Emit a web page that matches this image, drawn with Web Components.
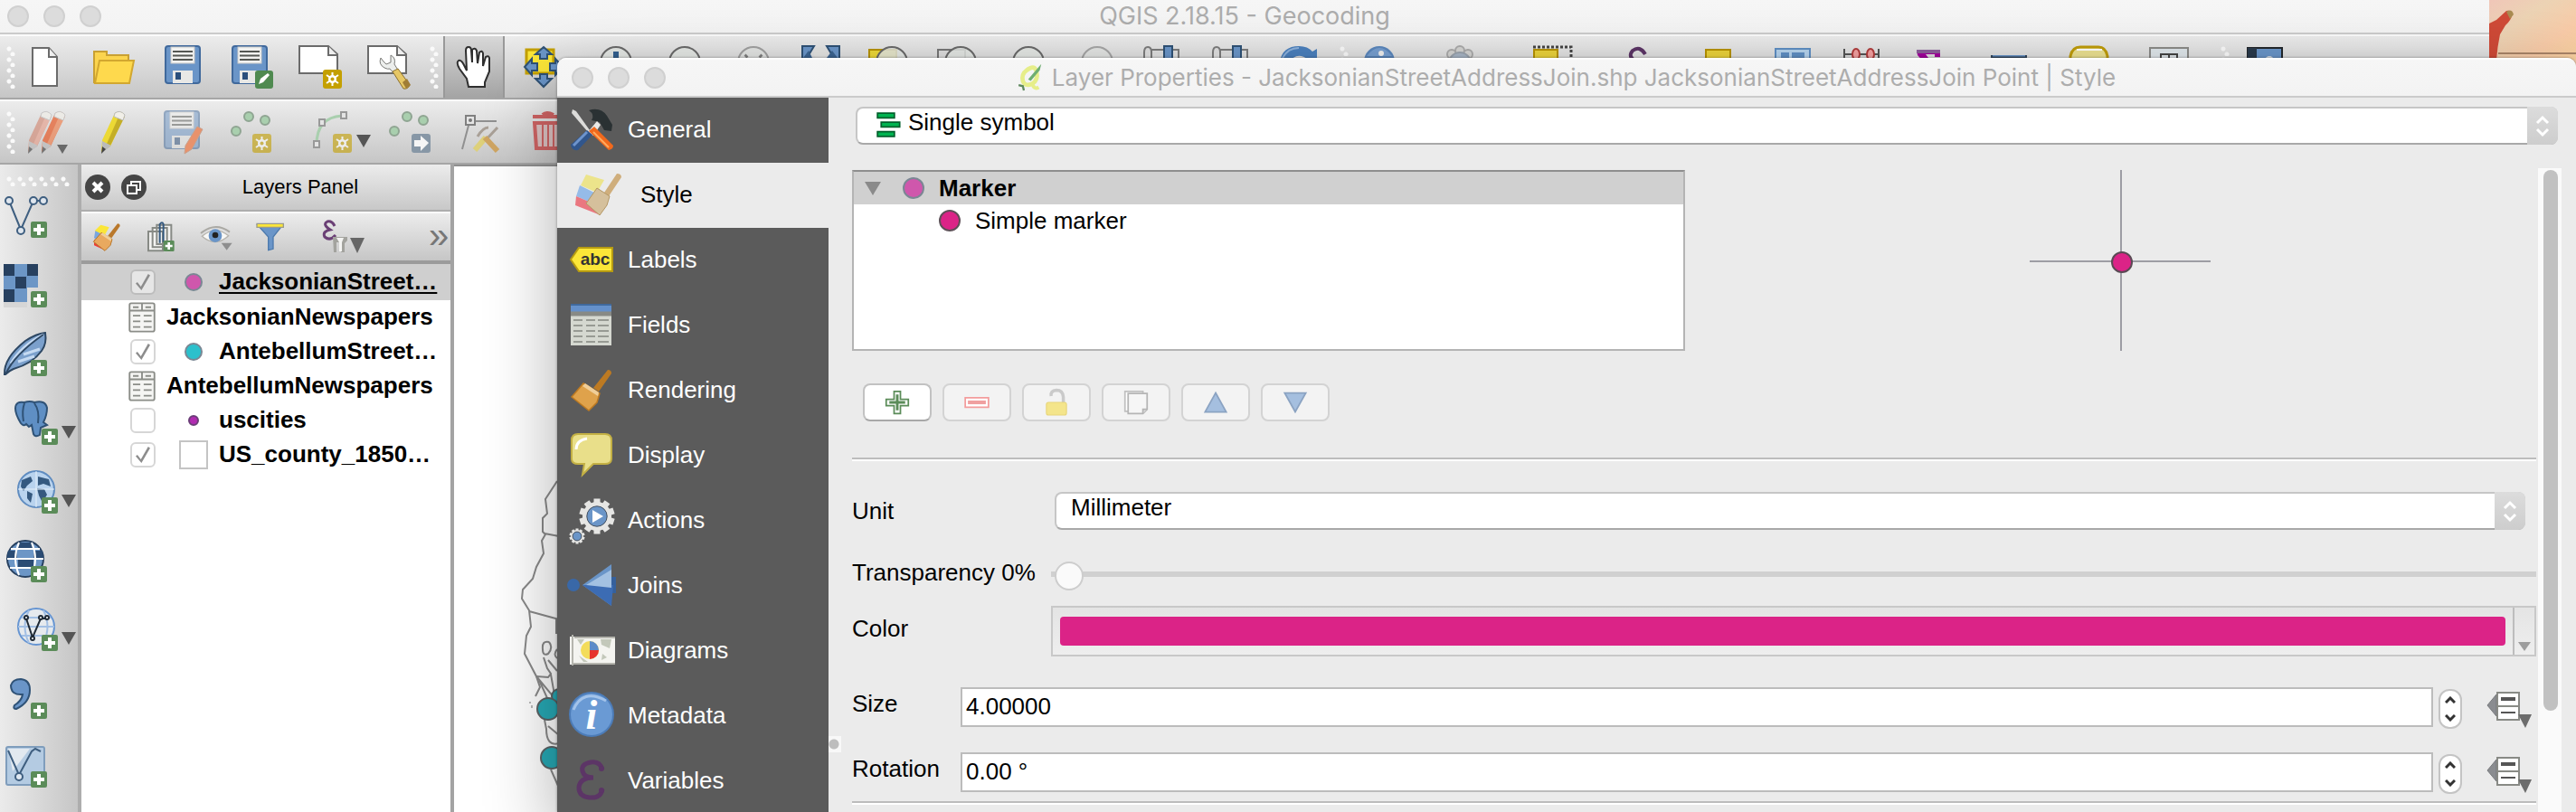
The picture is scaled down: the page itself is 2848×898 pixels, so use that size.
<!DOCTYPE html>
<html lang="en">
<head>
<meta charset="utf-8">
<title>QGIS 2.18.15 - Geocoding</title>
<style>
  html, body { margin: 0; height: 100%; }
  body { font: 26px/30px "Liberation Sans", Arial, sans-serif; color: #000; overflow: hidden; }
</style>
</head>
<body>
<qgis-desktop></qgis-desktop>

<script>
const BASE = '*{box-sizing:border-box}button{font:inherit;color:inherit;border:0;background:none;padding:0;margin:0}';

function define(name, css, html, setup) {
  customElements.define(name, class extends HTMLElement {
    connectedCallback() {
      if (this.shadowRoot) return;
      const root = this.attachShadow({ mode: 'open' });
      const markup = typeof html === 'function' ? html(this) : html;
      root.innerHTML = '<style>' + BASE + css + '</style>' + markup;
      if (setup) setup(this, root);
    }
  });
}

/* ---------- icon set, drawn on a 48 x 48 grid ---------- */
const plus = (x = 30, y = 30) => `<rect x="${x}" y="${y}" width="18" height="18" rx="2" fill="#5b8c59"/><path d="M${x + 9} ${y + 3}v12M${x + 3} ${y + 9}h12" stroke="#fff" stroke-width="4"/>`;
const star = (x = 29, y = 28, c = '#c4a000') => `<rect x="${x}" y="${y}" width="21" height="21" rx="3" fill="${c}"/><path d="M${x + 10.5} ${y + 3}v15M${x + 4} ${y + 6}l13 9M${x + 17} ${y + 6}l-13 9" stroke="#fff" stroke-width="2"/><circle cx="${x + 10.5}" cy="${y + 10.5}" r="4.5" fill="#fff"/><circle cx="${x + 10.5}" cy="${y + 10.5}" r="2" fill="${c}"/>`;
const floppy = `<rect x="5" y="1" width="38" height="41" rx="3" fill="#6a95c8" stroke="#40699c" stroke-width="2"/><rect x="11" y="2" width="26" height="18" fill="#f2f2f0" stroke="#c9c9c7"/><path d="M13 7h22M13 11.500h22M13 16h22" stroke="#555753" stroke-width="2"/><path d="M13 42V28h22v14z" fill="#e8e8e6"/><rect x="16" y="30" width="6" height="8" fill="#2b4f7c"/>`;
const lens = (x, o = 1, extra = '') => `<g opacity="${o}"><circle cx="${x}" cy="19" r="17" fill="#e4e7e4" fill-opacity=".85" stroke="#6a6a6a" stroke-width="2"/>${extra}</g>`;
const dots = `<g fill="#a9cfae" stroke="#8fa592" stroke-width="2"><circle cx="20" cy="7" r="5"/><circle cx="38" cy="11" r="5"/><circle cx="6" cy="23" r="5"/></g>`;
const brush = (h = '#c8872e', b = '#e0a458') => `<path d="M26 22L42 2q4 0 4 4L32 26z" fill="${h}"/><path d="M15 17l18 11-3 10-9 9L2 32z" fill="${b}" stroke="${h}" stroke-width="1.500"/><path d="M17 17l15 10-1 4-17-11z" fill="#f0ce98"/>`;
const veeNodes = (c, f = '#fff') => `<path d="M6 6L19 38 33 6h11" fill="none" stroke="${c}" stroke-width="2"/><g fill="${f}" stroke="${c}" stroke-width="2"><circle cx="6" cy="6" r="4"/><circle cx="33" cy="6" r="4"/><circle cx="44" cy="6" r="4"/><circle cx="19" cy="39" r="4"/></g>`;
const gear = (x, y, r) => { let s = ''; for (let a = 0; a < 360; a += 36) s += `<rect x="${x - r * .22}" y="${y - r * 1.22}" width="${r * .44}" height="${r * .5}" fill="#e6e6e4" transform="rotate(${a} ${x} ${y})"/>`; return s + `<circle cx="${x}" cy="${y}" r="${r}" fill="#e6e6e4"/><circle cx="${x}" cy="${y}" r="${r * .7}" fill="#6a95c8" stroke="#45505e"/>`; };
const pencil = (x, c, d) => `<g transform="translate(${x} 0)"><path d="M17 3q6-4 11 2L12 40 2 46 3 33z" fill="${c}"/><path d="M22 5L8 37l4 2L28 7z" fill="${d}"/><path d="M3 34l10 5-10 8z" fill="#bbb"/><path d="M3 40l4 3-5 5z" fill="#444"/><path d="M17 3q6-4 11 2l-2 6-10-4z" fill="#f1efe8" stroke="#bbb"/></g>`;

const ICONS = {
  'new': `<path d="M10 3h18l9 10v32H10z" fill="#fff" stroke="#6b6b6b" stroke-width="2"/><path d="M28 3v10h9" fill="#eee" stroke="#6b6b6b" stroke-width="2"/>`,
  open: `<path d="M2 7h14v4h24v10H10L4 41H2z" fill="#fbd44e" stroke="#c9a033" stroke-width="2"/><path d="M8 17h38l-5 25H3z" fill="#fed94d" stroke="#d2a72f" stroke-width="2"/>`,
  save: floppy,
  saveas: `<g transform="translate(-2 0)">${floppy}</g><rect x="28" y="28" width="20" height="20" rx="3" fill="#4f8a50"/><path d="M32 43l2-6 8-6 2 2-7 8z" fill="#fff"/>`,
  composer: `<path d="M1 1h32l10 9v21H1z" fill="#fff" stroke="#6b6b6b" stroke-width="2"/><path d="M33 1v10h10" fill="#eee" stroke="#6b6b6b" stroke-width="2"/>${star(27, 27)}`,
  manager: `<path d="M1 1h32l10 9v21H1z" fill="#fff" stroke="#6b6b6b" stroke-width="2"/><path d="M33 1v10h10" fill="#eee" stroke="#6b6b6b" stroke-width="2"/><path d="M15 14q-3 7 4 11 4 2 6 1l5 6 5-3-5-8q2-7-4-10v8l-5 2-3-3z" fill="#eceeec" stroke="#7b7b78"/><path d="M28 29l6-3 13 18q-2 5-7 4z" fill="#e6c766" stroke="#8b6f2c"/><path d="M39 41l5-4 4 7-5 4z" fill="#a07d35"/>`,
  hand: `<path d="M18 46l-2-9-8-11q-4-7-1-9 3-1 6 5l3 6-1-22q0-4 3-4t3 4l1 13 0-14q3-3 5 1l1 14 2-12q3-3 4 1v14l3-10q3-2 4 1v15l-5 12v5z" fill="#fff" stroke="#2f2f2f" stroke-width="2"/>`,
  panto: `<rect x="6" y="5" width="30" height="26" fill="#fbe638" stroke="#c4a000" stroke-width="3"/><g fill="#6a95c8" stroke="#2f5276" stroke-width="2"><path d="M25 2l9 8h-5v5h-8v-5h-5zM25 46l9-9h-5v-5h-8v5h-5zM4 24l8-9v5h6v8h-6v5zM46 24l-8-9v5h-6v8h6v5z"/></g>`,
  zoomin: lens(29, 1, '<path d="M29 7v22" stroke="#33608f" stroke-width="6"/>'),
  zoomout: lens(29),
  zoomnative: lens(29, .55, '<path d="M22 11l-2 2M36 11l2 2" stroke="#333" stroke-width="4"/>'),
  zoomfull: `<path d="M7 1h13l-6 10 4 30H7zM48 1H34l6 10-4 30h12z" fill="#6a95c8" stroke="#2f5276" stroke-width="2"/><path d="M8 14l6-8 4 8M34 14l6-8 6 8" fill="#3b6491"/><circle cx="27" cy="9" r="7" fill="#e4e4e2"/>`,
  zoomsel: `<rect x="5" y="5" width="30" height="24" fill="#ecd838" stroke="#b79300" stroke-width="2"/>${lens(30)}`,
  zoomlayer: `<rect x="5" y="5" width="30" height="24" fill="#ddd" stroke="#777" stroke-width="2"/>${lens(30)}`,
  zoomlast: lens(29),
  zoomnext: lens(29, .5),
  bookmark: `<path d="M5 8q0-6 4-6t4 6v30H5zM13 5h30v30H13z" fill="#e0e0e0" stroke="#7d7d7d" stroke-width="2"/><path d="M27 1h9v30h-9z" fill="#6a95c8" stroke="#2f5276" stroke-width="2"/>`,
  refresh: `<path d="M3 18Q6 1 24 1q10 0 15 6l5-3v18H28l6-6Q22 6 12 20z" fill="#4b80bd"/><path d="M6 14Q12 3 24 3" stroke="#8eb2dc" stroke-width="2" fill="none"/>`,
  identify: `<circle cx="19" cy="18" r="17" fill="#5b87bd"/><path d="M5 12Q19-6 33 12z" fill="#8aafdc" opacity=".6"/><circle cx="21" cy="9" r="3" fill="#eee"/>`,
  action: `<g fill="#d4d4d2" stroke="#aaa" stroke-width="2"><circle cx="13" cy="10" r="5"/><circle cx="22" cy="6" r="5"/><circle cx="31" cy="10" r="5"/></g><circle cx="22" cy="20" r="12" fill="#a8b6c6" stroke="#9aa3ad" stroke-width="2"/>`,
  selectrect: `<path d="M3 2h42v28" stroke="#444" stroke-width="3" stroke-dasharray="3 2" fill="none"/><rect x="4" y="5" width="26" height="22" fill="#ead23b" stroke="#b79300" stroke-width="2"/>`,
  expr: `<path d="M31 10Q25 0 17 6q-6 7 4 12" fill="none" stroke="#5c3566" stroke-width="4"/>`,
  deselect: `<rect x="10" y="5" width="27" height="24" fill="#ead23b" stroke="#b79300" stroke-width="2"/>`,
  attrs: `<rect x="5" y="4" width="38" height="30" fill="#b5d3ee" stroke="#5f8fc4" stroke-width="2"/><path d="M11 11h9M23 11h14" stroke="#5f8fc4" stroke-width="6"/>`,
  calc: `<path d="M5 4v30M43 4v30M5 10h38" stroke="#555" stroke-width="2"/><g fill="#f3a0a0" stroke="#b03a3a" stroke-width="2"><ellipse cx="18" cy="10" rx="4" ry="6"/><ellipse cx="34" cy="10" rx="4" ry="6"/></g>`,
  sum: `<path d="M9 5h26v8h-6v-3H19l9 12-9 12h-8l9-12L10 11z" fill="#a3009c"/><path d="M9 5h26v4H9z" fill="#8d5f9b"/>`,
  ruler: `<path d="M4 11v8h38v-8" fill="#6a95c8" stroke="#33475e" stroke-width="2"/><path d="M4 14h38" stroke="#33475e" stroke-width="3"/>`,
  tips: `<path d="M3 28V12Q5 2 14 2h20q8 0 10 10v16z" fill="#ebe191" stroke="#bf9c0a" stroke-width="3"/><path d="M10 5h28" stroke="#fff" stroke-width="2"/>`,
  text: `<rect x="3" y="3" width="42" height="32" fill="#dfe6ea" stroke="#8b8b88" stroke-width="2"/><path d="M15 16v-6h18v6M24 9v20" fill="none" stroke="#444" stroke-width="2"/>`,
  help: `<rect x="5" y="3" width="38" height="34" fill="#6a95c8" stroke="#23272b" stroke-width="2"/><path d="M5 3h10v34H5z" fill="#2a3a4b"/><circle cx="29" cy="17" r="5" fill="#dce4ec"/>`,
  pencils: `<g opacity=".65">${pencil(3, '#d38a75', '#e8a08c')}${pencil(18, '#e8501a', '#f07d4a')}<path d="M37 38h12l-6 10z" fill="#333"/></g>`,
  pencil: pencil(8, '#ecd935', '#c4ae27'),
  saveedits: `<g opacity=".5"><g transform="translate(-1 0)">${floppy}</g></g><path d="M40 18l6 3-12 22-8 5 1-9z" fill="#e8926c" stroke="#c9a08c"/>`,
  addpoint: `<g transform="translate(1 0)">${dots}</g><g opacity=".6">${star(25, 26)}</g>`,
  addcurve: `<path d="M8 38Q8 8 36 6" fill="none" stroke="#a9cfae" stroke-width="3"/><g fill="#e4e4e4" stroke="#999" stroke-width="2"><path d="M5 34h6v7H5zM11 10h6v7h-6zM35 2h6v7h-6z"/></g><g opacity=".6">${star(26, 26)}</g>`,
  movepoint: `${dots}<rect x="25" y="26" width="21" height="21" rx="3" fill="#8797a6"/><path d="M28 33h7v-5l9 8-9 9v-5h-7z" fill="#f5f5f5"/>`,
  nodes: `<path d="M5 43L13 13M18 12h25" stroke="#909090" stroke-width="2" fill="none"/><rect x="9" y="6" width="10" height="10" fill="#e5e5e5" stroke="#808080" stroke-width="2"/><circle cx="14" cy="11" r="2" fill="#777"/><path d="M22 29q6-10 12-10M44 19L30 34" stroke="#a9a097" stroke-width="3" fill="none"/><path d="M31 30L19 44" stroke="#ddd07a" stroke-width="6"/><path d="M30 30l14 15" stroke="#cfa562" stroke-width="6"/>`,
  trash: `<g fill="none" stroke="#cf6464"><path d="M7 7h34M18 5q4-4 12 0" stroke-width="4"/><path d="M9 14h30l-2 28H11z" stroke-width="4" fill="#dcc3c3"/><path d="M18 16v24M24 16v24M30 16v24" stroke-width="2"/></g>`,
  vector: veeNodes('#3f5f80', '#dfe6ee') + plus(30, 29),
  raster: `<path d="M0 0h38v26H26v22H0z" fill="#6c96c6"/><path d="M0 0h12v13H0zM26 0h12v13H26zM13 14h12v13H13zM0 28h12v14H0z" fill="#27405f"/><path d="M0 42h26v6H0z" fill="#d6d6d6"/>${plus(30, 30)}`,
  feather: `<path d="M1 46Q0 28 24 9 36 1 46 0q2 12-4 20-10 14-31 20-5 2-9 6z" fill="#7ba0cc" stroke="#2d4763" stroke-width="2"/><path d="M8 34Q20 14 44 2M16 32l18-6M22 24l18-6" stroke="#c5daf2" stroke-width="3" fill="none"/><path d="M2 46Q12 24 44 2" stroke="#2d4763" stroke-width="2" fill="none"/>${plus(30, 30)}`,
  postgis: `<path d="M1 8Q1-1 11 1q6-2 11 0 12-3 14 6 0 8-4 16l4 3-7 3-1 8q-5 3-7-1l-2-10-3 2-3-3q-3 3-6-1Q1 14 1 8z" fill="#5f8fc4" stroke="#2f5276" stroke-width="2"/><path d="M11 2q-3 8-1 20M22 2q6 8 4 22" stroke="#2f5276" stroke-width="2" fill="none"/>${plus(30, 30)}`,
  spatialite: `<circle cx="24" cy="21" r="20" fill="#b9d3ee" stroke="#5f8cc0" stroke-width="2"/><path d="M8 11l10-4 2 5-6 5-4 6-3-5zM14 23l6 3-2 10-4-5zM26 7l12 3 2 8-8-3-6 2zM25 20l8 1 3 6-5 9-4-8z" fill="#35597f"/><path d="M4 21h40M24 1v40" stroke="#e8f1fa"/>${plus(30, 30)}`,
  wms: `<circle cx="24" cy="22" r="20" fill="#6c96c6" stroke="#27405f" stroke-width="2"/><path d="M5 13h10v9H4zM33 13h10l1 9H33zM16 22h17v10H16zM17 4h14l3 7H14z" fill="#2b4c74"/><path d="M4 22h40M8 11h32M7 32h34M17 4q-8 18 0 36M31 4q8 18 0 36" stroke="#fff" stroke-width="2" fill="none"/>${plus(30, 30)}`,
  wfs: `<g fill="none" stroke="#6695d2" stroke-width="2"><circle cx="24" cy="21" r="20" fill="#e6eaee"/><path d="M4 21h40M8 11h32M8 31h32M16 3q-9 18 0 36M32 3q9 18 0 36" stroke="#a2bfe4"/></g><g fill="#fff" stroke="#1f2a36" stroke-width="2"><path d="M13 12L20 33 29 12h8" fill="none"/><circle cx="13" cy="11" r="2"/><circle cx="29" cy="11" r="2"/><circle cx="36" cy="11" r="2"/><circle cx="20" cy="34" r="2"/></g>${plus(30, 30)}`,
  comma: `<path d="M8 10q2-7 11-7 10 1 10 12 0 14-15 21-4 0-2-4 8-5 9-12-13 1-13-10z" fill="#6a95c8" stroke="#2f5276" stroke-width="2"/>${plus(30, 29)}`,
  virtual: `<rect x="3" y="2" width="42" height="42" rx="2" fill="#b4cbe2" stroke="#7f9dbc" stroke-width="2"/><path d="M5 4h24L10 29z" fill="#e2e9f0"/><path d="M5 6l12 27L31 7l4-3 6 3" fill="none" stroke="#3f5f80" stroke-width="2"/><circle cx="17" cy="35" r="4" fill="#dfe8f2" stroke="#3f5f80" stroke-width="2"/>${plus(30, 29)}`,
  style: `<path d="M14 4l14 4-8 14-16-8z" fill="#fbe638"/><path d="M5 14l16 8-6 10-12-6z" fill="#7aa6de"/><path d="M3 28l12 4 6 14L3 38z" fill="#ee3b35"/>${brush('#b9782b', '#e9a95f')}`,
  stylepale: `<path d="M12 2l20 6-8 14-18-8z" fill="#ece48b"/><path d="M5 14l16 8-6 10-14-6z" fill="#95bbe8"/><path d="M1 26l14 6 13 15L0 36z" fill="#ea7780"/><path d="M32 22L46 1q5 0 5 4L37 26z" fill="#cfae7c"/><path d="M24 17l14 9-3 10-8 11-15-13z" fill="#d5c09c" stroke="#b49764"/>`,
  group: `<g fill="#f3f3f1" stroke="#878a85" stroke-width="3"><path d="M3 15h24v32H3zM10 9h24v32H10zM17 4h24v32H17z"/></g><path d="M22 34V3q4-5 6 0v30" fill="none" stroke="#35597f" stroke-width="3"/>${plus(28, 30)}`,
  eye: `<path d="M0 18Q24-2 48 16" fill="none" stroke="#aaa9a4" stroke-width="3"/><path d="M2 23Q24 4 46 22 24 42 2 23z" fill="#f8f8f6" stroke="#b5b3ad" stroke-width="2"/><circle cx="24" cy="22" r="11" fill="#6a95c8"/><circle cx="24" cy="21" r="5" fill="#222"/><path d="M34 34h18l-9 12z" fill="#8e8e8e"/>`,
  funnel: `<path d="M4 4h42L30 24v20l-8 2V24z" fill="#6a95c8" stroke="#4d7aad" stroke-width="2"/><path d="M3 2h44v6H3z" fill="#fbe638" stroke="#9a9b8c" stroke-width="2"/>`,
  general: `<path d="M3 2l4 2 15 21-2 2L2 6z" fill="#dcdcda"/><path d="M21 3q13-4 20 6l6 10-1 7-8-1-5-9-9-2q4-6-3-11z" fill="#2a3133"/><path d="M30 15l4 4-8 12-6-4z" fill="#e9e9e7"/><path d="M19 25l6 5L9 47q-7 1-8-6z" fill="#31568c"/><path d="M19 27L4 42" stroke="#6e94cc" stroke-width="3"/><path d="M21 26l6-5 21 21q0 4-5 5z" fill="#f2691c"/><path d="M26 27l17 17" stroke="#ffab5e" stroke-width="2"/>`,
  labels: `<path d="M1 24l9-13h37v26H10z" fill="#fbe638" stroke="#b69b12" stroke-width="2"/><text x="28" y="30" font-family="Liberation Sans" font-weight="700" font-size="19" text-anchor="middle" fill="#333">abc</text>`,
  fields: `<rect x="1" y="1" width="45" height="46" fill="#d5d8d0"/><path d="M1 1h45v9H1z" fill="#6591cb"/><path d="M1 2h45" stroke="#40699c" stroke-width="2"/><path d="M1 12h45" stroke="#888a85" stroke-width="5"/><path d="M4 19h10M18 19h10M31 19h12M4 25h10M18 25h10M31 25h12M4 31h10M18 31h10M31 31h12M4 37h10M18 37h10M31 37h12M4 43h10M18 43h10M31 43h12" stroke="#979a93" stroke-width="2"/>`,
  rendering: brush('#bd7a22', '#dfa24b'),
  display: `<path d="M9 1h30q7 0 7 7v20q0 6-7 6H26L14 46l2-12H9q-7 0-7-6V8q0-7 7-7z" fill="#e9df8a" stroke="#c3b044" stroke-width="2"/><path d="M7 18q0-10 12-12" fill="none" stroke="#fff" stroke-width="3"/>`,
  actions: gear(30, 20, 16) + gear(8, 42, 7) + '<path d="M25 13l12 7-12 7z" fill="#fff"/>',
  joins: `<path d="M14 24L46 1v46z" fill="#6a95c8"/><path d="M46 15h5v18h-5z" fill="#35609c"/><path d="M14 24h34l-2 23z" fill="#3c6cb4"/><path d="M18 24L46 7v20z" fill="#a3c1e2"/><ellipse cx="4" cy="24" rx="7" ry="7" fill="#3968a8"/>`,
  diagrams: `<rect x="0" y="9" width="50" height="31" fill="#f4f4f0"/><path d="M3 7v34M5 10h45M3 39h47" stroke="#b5b5ae" stroke-width="2"/><path d="M8 12h8l-4 6zM34 12h12l-2 10-9-4zM10 30l5 7h5zM36 28l5 4-6 3z" fill="#c3c8ba"/><circle cx="22" cy="24" r="10" fill="#f3dc5a"/><path d="M22 24V14a10 10 0 0 1 10 10z" fill="#5c8bc8"/><path d="M22 24h10a10 10 0 0 1-10 10z" fill="#e6332c"/>`,
  metadata: `<circle cx="24" cy="23" r="24" fill="#6a9ad4" stroke="#4c7cb8" stroke-width="2"/><path d="M4 18Q14-6 40 8" stroke="#a3c3ea" stroke-width="3" fill="none"/><text x="24" y="39" font-family="Liberation Serif" font-weight="700" font-style="italic" font-size="46" text-anchor="middle" fill="#fff">i</text>`,
  epsilon: `<path d="M36 12Q33 2 23 4q-11 2-9 10 2 7 12 7-15 0-16 11 0 10 12 11 12 1 14-9" fill="none" stroke="#5c3566" stroke-width="5"/><circle cx="35" cy="11" r="3" fill="#5c3566"/><circle cx="35" cy="35" r="3" fill="#5c3566"/>`,
  single: `<g fill="#00b350" stroke="#00602c" stroke-width="3"><path d="M2 2h32v9H2zM9 19h35v9H9zM2 37h32v9H2z"/></g>`,
  add: `<path d="M18 3h12v15h15v12H30v15H18V30H3V18h15z" fill="#fff" stroke="#5b8c59" stroke-width="3"/><path d="M24 9v30M9 24h30" stroke="#5b8c59" stroke-width="5"/>`,
  remove: `<path d="M2 15h44v18H2z" fill="#fff" stroke="#f39c9c" stroke-width="3"/><path d="M7 24h34" stroke="#f0a0a0" stroke-width="7"/>`,
  lock: `<path d="M14 12q-2-10 10-11 12 0 13 13v10" fill="none" stroke="#cacaca" stroke-width="6"/><rect x="5" y="24" width="38" height="24" rx="4" fill="#f4e58b" stroke="#e8d67a" stroke-width="2"/>`,
  copy: `<path d="M3 3h34v38H3z" fill="#fff" stroke="#c0c0c0" stroke-width="3"/><path d="M9 7h36v30l-8 8H9z" fill="#f6f6f6" stroke="#b5b5b5" stroke-width="3"/><path d="M37 45v-8h8" fill="#ddd" stroke="#b5b5b5" stroke-width="3"/>`,
  up: `<path d="M24 6l20 36H4z" fill="#a5bfdf" stroke="#8ba3c2" stroke-width="3"/>`,
  down: `<path d="M24 42L4 6h40z" fill="#a5bfdf" stroke="#8ba3c2" stroke-width="3"/>`,
  override: `<path d="M0 20L10 8v24z" fill="#8a8c90" stroke="#77797c"/><path d="M11 6h24v30H11zM11 21h24" fill="#fff" stroke="#888a85" stroke-width="2"/><path d="M15 13h16" stroke="#555" stroke-width="4"/><path d="M15 28h16" stroke="#555" stroke-width="2"/><path d="M34 30h15l-7 15z" fill="#6c6c6c"/>`,
  table: `<rect x="2" y="-1" width="44" height="50" rx="3" fill="#f5f5f3" stroke="#8b8d88" stroke-width="3"/><path d="M2 12h44M24-1v13" stroke="#8b8d88" stroke-width="3"/><path d="M8 6h10M30 6h10M8 21h13M27 21h14M8 31h13M27 31h14M8 41h13M27 41h14" stroke="#8b8d88" stroke-width="3"/>`,
  logo: `<path d="M17 10Q32-2 36 12q4 17-9 24-13 5-17-6Q7 17 17 10z" fill="none" stroke="#e6ee8a" stroke-width="8"/><path d="M28 32q2 16 12 10" fill="none" stroke="#e6ee8a" stroke-width="7"/><path d="M20 27L45-2l-3 12-17 20z" fill="#6fae72"/><path d="M2 38l8 2 2 8" stroke="#5f8a5f" stroke-width="4" fill="none"/>`
};

define('q-icon', ':host{display:inline-block;width:48px;height:48px;flex:none}svg{display:block;width:100%;height:100%;overflow:visible}',
  el => `<svg viewBox="0 0 48 48" aria-hidden="true">${ICONS[el.getAttribute('name')] || ''}</svg>`);

/* ---------- window chrome ---------- */
define('window-title', `
  :host{display:grid;grid-template-columns:1fr auto 1fr;align-items:center;flex:none;background:linear-gradient(#f6f6f6,#f3f3f3);
    border-bottom:2px solid #cbcbcb;color:#adadad;font:27px/30px Inter,Roboto,sans-serif}
  :host([dialog]){font-size:26px}
  .lights{display:flex;gap:16px;padding-left:8px}
  .lights button{width:24px;height:24px;border-radius:50%;background:#dcdcdc;border:2px solid #d0d0d0}
  :host([dialog]) .lights{padding-left:16px}
  .text{display:flex;align-items:center;gap:10px;white-space:nowrap}`,
  '<div class="lights"><button aria-label="Close"></button><button aria-label="Minimise"></button><button aria-label="Zoom"></button></div><div class="text"><slot></slot></div>');

define('tool-grip', `:host{display:block;flex:none;width:12px;height:48px;align-self:center;
    background:radial-gradient(circle at 4px 4px,#fafafa 2px,transparent 3px) 0 0/12px 12px,radial-gradient(circle at 8px 10px,#fafafa 2px,transparent 3px) 0 0/12px 12px}
  :host([flat]){width:72px;height:12px}`, '');

define('tool-bar', `:host{display:flex;flex:none;align-items:stretch;background:linear-gradient(#ececec,#c6c6c6);border-bottom:2px solid #a6a6a6;border-top:2px solid #fafafa;overflow:hidden}
  :host([vertical]){flex-direction:column;width:90px;padding-top:12px;border:0;border-right:4px solid #adadad;background:linear-gradient(90deg,#ebebeb,#c6c6c6)}`, '<slot></slot>');

define('tool-button', `
  :host{display:block;flex:none;width:var(--w,76px)}
  button{display:flex;align-items:center;justify-content:center;gap:4px;width:100%;height:100%}
  :host([menu]) button{justify-content:flex-end;padding-right:6px}
  :host([pressed]) button{margin:0 4px;width:68px;background:linear-gradient(#d8d8d8,#a4a4a4);border:solid #999;border-width:0 2px}
  :host([side]){width:auto;height:76px}
  :host([side]) button{justify-content:flex-start;padding:0 0 0 4px}
  :host([side][menu]) button{padding-left:16px}
  q-icon{width:var(--icon,48px);height:var(--icon,48px)}
  i{width:0;height:0;border:8px solid transparent;border-top:14px solid #555;border-bottom:0;margin-top:20px}`,
  el => `<button aria-label="${el.getAttribute('label')}"><q-icon name="${el.getAttribute('icon')}"></q-icon>${el.hasAttribute('menu') ? '<i></i>' : ''}</button>`);

const tb = (icon, label, more = '') => `<tool-button icon="${icon}" label="${label}" ${more}></tool-button>`;

define('main-toolbar', ':host{display:block;flex:none}tool-bar{height:72px}tool-grip{margin:0 0 0 6px}tool-grip:first-child{margin-right:-6px}', `
  <tool-bar><tool-grip></tool-grip>
  ${tb('new', 'New project')}${tb('open', 'Open project')}${tb('save', 'Save project')}${tb('saveas', 'Save as')}${tb('composer', 'New composer')}${tb('manager', 'Composer manager')}
  <tool-grip></tool-grip>
  ${tb('hand', 'Pan', 'pressed')}${tb('panto', 'Pan to selection')}${tb('zoomin', 'Zoom in')}${tb('zoomout', 'Zoom out')}${tb('zoomnative', 'Native resolution')}${tb('zoomfull', 'Zoom full')}${tb('zoomsel', 'Zoom to selection')}${tb('zoomlayer', 'Zoom to layer')}${tb('zoomlast', 'Zoom last')}${tb('zoomnext', 'Zoom next')}${tb('bookmark', 'New bookmark')}${tb('bookmark', 'Show bookmarks')}${tb('refresh', 'Refresh')}
  <tool-grip></tool-grip>
  ${tb('identify', 'Identify')}${tb('action', 'Run action', 'style="--w:96px"')}${tb('selectrect', 'Select features', 'style="--w:104px"')}${tb('expr', 'Select by expression', 'style="--w:88px"')}${tb('deselect', 'Deselect', 'style="--w:88px"')}${tb('attrs', 'Attribute table')}${tb('calc', 'Field calculator')}${tb('sum', 'Statistics')}${tb('ruler', 'Measure', 'style="--w:100px"')}${tb('tips', 'Map tips')}${tb('text', 'Annotation', 'style="--w:100px"')}
  <tool-grip></tool-grip>
  ${tb('help', 'Help')}</tool-bar>`);

define('edit-toolbar', ':host{display:block;flex:none}tool-bar{height:72px}tool-grip{margin:0 -6px 0 6px}', `
  <tool-bar><tool-grip></tool-grip>
  ${tb('pencils', 'Current edits')}${tb('pencil', 'Toggle editing')}${tb('saveedits', 'Save edits')}${tb('addpoint', 'Add feature')}${tb('addcurve', 'Add circular string', 'menu style="--w:100px"')}${tb('movepoint', 'Move feature')}${tb('nodes', 'Node tool')}${tb('trash', 'Delete selected')}</tool-bar>`);

define('manage-toolbar', ':host{display:flex;flex:none}tool-grip{margin:0 0 -4px 6px;align-self:flex-start}', `
  <tool-bar vertical><tool-grip flat></tool-grip>
  ${[['vector', 'Add vector layer'], ['raster', 'Add raster layer'], ['feather', 'Add SpatiaLite layer'], ['postgis', 'Add PostGIS layer', 'menu'], ['spatialite', 'Add WMS layer', 'menu'], ['wms', 'Add WCS layer'], ['wfs', 'Add WFS layer', 'menu'], ['comma', 'Add delimited text layer'], ['virtual', 'Add virtual layer']].map(a => tb(a[0], a[1], 'side ' + (a[2] || ''))).join('')}
  </tool-bar>`);

/* ---------- layers panel ---------- */
define('symbol-dot', ':host{display:block;flex:none;width:var(--d,20px);height:var(--d,20px);border-radius:50%;background:var(--c);border:2px solid var(--b,#7b8794)}', '');

define('layer-row', `
  :host{display:flex;align-items:center;height:38px;padding-left:54px;font-weight:700;white-space:nowrap}
  :host([current]){height:40px;background:#cfcfcf}
  label{display:flex;align-items:center}
  .name{padding-bottom:2px}
  :host([current]) .name{text-decoration:underline;text-decoration-thickness:2px;text-underline-offset:3px}
  input{appearance:none;margin:0;width:28px;height:28px;border:2px solid #d6d6d6;border-radius:6px;background:#fff;display:grid;place-items:center}
  :host([current]) input{background:#e6e6e6;border-color:#bdbdbd}
  input:checked::before{content:"";width:16px;height:18px;background:#8d8d8d;clip-path:polygon(0 58%,12% 50%,36% 78%,86% 0,100% 8%,40% 100%)}
  .sym{width:70px;display:flex;justify-content:center;padding-left:14px}
  .box{width:32px;height:32px;border:2px solid #c4c4c4;background:#fff}
  q-icon{width:30px;height:30px;margin:0 12px 0 -2px}`,
  el => el.hasAttribute('table') ? '<q-icon name="table"></q-icon><span class="name"><slot></slot></span>' :
    `<label><input type="checkbox" ${el.hasAttribute('checked') ? 'checked' : ''}><span class="sym">${el.hasAttribute('polygon') ? '<span class="box"></span>' : `<symbol-dot style="${el.getAttribute('symbol')}"></symbol-dot>`}</span><span class="name"><slot></slot></span></label>`);

define('layers-panel', `
  :host{display:flex;flex-direction:column;flex:none;width:412px;border-right:4px solid #a3a3a3;background:#fff}
  header{display:flex;align-items:center;height:52px;padding:0 8px 0 4px;gap:12px;font-size:22px;background:linear-gradient(#ececec,#c8c8c8);border-bottom:2px solid #adadad}
  header button{width:28px;height:28px;border-radius:50%;background:#454545;display:grid;place-items:center}
  header svg{display:block;width:28px;height:28px}
  h2{flex:1;margin:0;font:inherit;text-align:center}
  nav{display:flex;gap:4px;height:58px;align-items:stretch;background:linear-gradient(#ececec,#c6c6c6);border-bottom:4px solid #9b9b9b;border-top:2px solid #fafafa}
  nav tool-button{--w:56px;--icon:32px}
  .filter{width:100px;display:flex;align-items:center;justify-content:center}
  .filter svg{width:50px;height:38px}
  .more{margin-left:auto;width:26px;font-size:40px;color:#777;padding-bottom:4px}`, `
  <header>
    <button aria-label="Close panel"><svg viewBox="0 0 28 28"><path d="M9 9l10 10M19 9L9 19" stroke="#fff" stroke-width="4"/></svg></button>
    <button aria-label="Float panel"><svg viewBox="0 0 28 28" fill="none" stroke="#fff" stroke-width="2"><path d="M11 11V8h10v9h-3M7 12h10v9H7z"/></svg></button>
    <h2>Layers Panel</h2>
  </header>
  <nav>${tb('style', 'Layer styling')}${tb('group', 'Add group')}${tb('eye', 'Manage visibility')}${tb('funnel', 'Filter legend')}
    <button class="filter" aria-label="Filter by expression"><svg viewBox="0 0 50 38"><path d="M15 7Q12 1 7 2 1 5 10 11 1 13 4 19q6 5 12-2" fill="none" stroke="#6a3f75" stroke-width="3"/><path d="M13 19h16v4l-3 3v10h-4V25l-5 0v11h-3z" fill="#a3a39e"/><path d="M17 20h8l-2 5v10h-3V25z" fill="#f4f4f2"/><path d="M32 20h16l-8 17z" fill="#666"/></svg></button>
    <button class="more" aria-label="More">»</button></nav>
  <section>
    <layer-row current checked symbol="--c:#cf57ac">JacksonianStreet…</layer-row>
    <layer-row table>JacksonianNewspapers</layer-row>
    <layer-row checked symbol="--c:#2cc0cc">AntebellumStreet…</layer-row>
    <layer-row table>AntebellumNewspapers</layer-row>
    <layer-row symbol="--c:#b02bb0;--d:12px;--b:#6b3d78">uscities</layer-row>
    <layer-row checked polygon>US_county_1850…</layer-row>
  </section>`);

define('map-canvas', ':host{display:block;flex:1;background:#fff;border-top:2px solid #8f8f8f}svg{display:block;width:130px;height:714px}', `
  <svg viewBox="0 2 130 714" fill="none" stroke="#8a8a8a" stroke-width="2">
    <path d="M114 350l-13 20 2 16-5 5v15l3 3-4 7 2 14-8 15-4 13-11 12-1 10 8 13 2 18-5 10-2 20 13 25 4 12-5 10M100 408l16 3M83 494l33 9M113 503v16"/>
    <path d="M105 528q-8-2-7 8 0 8 6 5 6-7 1-13M99 545l4 12 4 6-3 4-13-1M114 536q-5 6 0 10M104 548l10 12M107 564l4 22M91 566l20 24M94 570l9 20M100 614l2 10q0 20 14 16M104 621l12 10M107 669l8 18"/>
    <path d="M84 594v2M86 598v3" stroke="#bbb"/>
    <g fill="#27aab6" stroke="#5d6466"><circle cx="116" cy="588" r="8"/><circle cx="104" cy="602" r="12"/><circle cx="108" cy="656" r="12"/></g>
  </svg>`);

define('main-window', `
  :host{display:flex;flex-direction:column;height:100%;background:#ebebeb}
  window-title{height:38px}
  main{display:flex;flex:1;min-height:0}`, `
  <window-title>QGIS 2.18.15 - Geocoding</window-title>
  <main-toolbar></main-toolbar>
  <edit-toolbar></edit-toolbar>
  <main><manage-toolbar></manage-toolbar><layers-panel></layers-panel><map-canvas></map-canvas></main>`);

/* ---------- layer properties dialog ---------- */
define('settings-tab', `
  :host{display:block;flex:none;height:72px;color:#fff}
  button{display:flex;align-items:center;gap:16px;width:100%;height:100%;padding:0 0 2px 14px;text-align:left}
  :host([selected]){background:#ebebeb;color:#000}
  :host([selected]) button{padding-left:20px;gap:24px}`,
  el => `<button role="tab"><q-icon name="${el.getAttribute('icon')}"></q-icon><slot></slot></button>`);

define('settings-tabs', ':host{display:flex;flex-direction:column;flex:none;width:300px;background:#5b5b5b;overflow:hidden}', `
  <settings-tab icon="general">General</settings-tab>
  <settings-tab icon="stylepale" selected>Style</settings-tab>
  <settings-tab icon="labels">Labels</settings-tab>
  <settings-tab icon="fields">Fields</settings-tab>
  <settings-tab icon="rendering">Rendering</settings-tab>
  <settings-tab icon="display">Display</settings-tab>
  <settings-tab icon="actions">Actions</settings-tab>
  <settings-tab icon="joins">Joins</settings-tab>
  <settings-tab icon="diagrams">Diagrams</settings-tab>
  <settings-tab icon="metadata">Metadata</settings-tab>
  <settings-tab icon="epsilon">Variables</settings-tab>`);

const COMBO = `
  .combo{position:relative;display:flex;height:42px;flex:1}
  select{appearance:none;width:100%;height:42px;margin:0;padding:0 40px 8px 16px;font:inherit;color:#000;background:#fff;border:2px solid #c6c6c6;border-bottom-color:#a8a8a8;border-radius:8px}
  .cap{position:absolute;right:0;top:0;bottom:0;width:34px;border-radius:0 8px 8px 0;background:linear-gradient(#dcdcdc,#cdcdcd);pointer-events:none}
  .cap svg{display:block;width:34px;height:42px}`;
const CAP = '<span class="cap"><svg viewBox="0 0 34 42" fill="none" stroke="#fff" stroke-width="3"><path d="M11 18l6-6 6 6M11 25l6 6 6-6"/></svg></span>';

define('renderer-combo', ':host{display:flex}' + COMBO + 'q-icon{position:absolute;left:23px;top:6px;width:28px;height:28px}select{padding-left:56px}',
  `<div class="combo"><select aria-label="Renderer"><option>Single symbol</option></select><q-icon name="single"></q-icon>${CAP}</div>`);

define('combo-field', ':host{display:flex;align-items:center}label{width:224px;flex:none}' + COMBO,
  el => `<label for="c">${el.getAttribute('label')}</label><div class="combo"><select id="c"><option>${el.getAttribute('value')}</option></select>${CAP}</div>`);

define('slider-field', `
  :host{display:flex;align-items:center;height:34px}
  label{width:220px;flex:none;padding-bottom:8px}
  .track{flex:1;display:flex;padding:0 4px;background:linear-gradient(#d0d0d0,#d0d0d0) 0 12px/100% 6px no-repeat}
  input{appearance:none;width:100%;height:34px;margin:0;background:none}
  input::-webkit-slider-thumb{appearance:none;width:32px;height:32px;border-radius:50%;background:#fafafa;border:2px solid #cdcdcd}`,
  '<label for="r">Transparency 0%</label><div class="track"><input id="r" type="range" min="0" max="100" value="0"></div>');

define('color-field', `
  :host{display:flex;align-items:center;height:56px}
  label{width:220px;flex:none;padding-bottom:6px}
  .box{flex:1;display:flex;height:56px;border:2px solid #c8c8c8;background:linear-gradient(#e4e4e4,#eee)}
  #swatch{flex:1;margin:10px 8px;border-radius:4px;background:#db2387}
  .menu{width:24px;border-left:2px solid #bdbdbd;display:flex;align-items:flex-end;justify-content:center;padding-bottom:4px}
  i{border:7px solid transparent;border-top:10px solid #9d9d9d;border-bottom:0}`,
  '<label for="swatch">Color</label><div class="box"><button id="swatch"></button><button class="menu" aria-label="Color menu"><i></i></button></div>');

define('number-field', `
  :host{display:flex;align-items:center;height:44px}
  label{width:120px;flex:none;padding-bottom:8px}
  input{flex:1;min-width:0;height:44px;margin:0;padding:0 4px 2px;border:2px solid #bcbcbc;background:#fff;font:inherit;color:#000;outline:0}
  .spin{display:flex;flex-direction:column;width:26px;height:44px;margin:4px 28px 0 6px;border:2px solid #c4c4c4;border-radius:12px;background:#fff;overflow:hidden}
  .spin button{flex:1;display:grid;place-items:center}
  .spin svg{width:12px;height:8px}
  .override{width:54px;height:44px}
  .override q-icon{display:block}`,
  el => `<label for="n">${el.getAttribute('label')}</label><input id="n" type="text" value="${el.getAttribute('value')}">
  <span class="spin"><button aria-label="Increase"><svg viewBox="0 0 12 8"><path d="M1 7l5-5 5 5" fill="none" stroke="#333" stroke-width="3"/></svg></button><button aria-label="Decrease"><svg viewBox="0 0 12 8"><path d="M1 1l5 5 5-5" fill="none" stroke="#333" stroke-width="3"/></svg></button></span>
  <button class="override" aria-label="Data defined override"><q-icon name="override"></q-icon></button>`);

define('symbol-tree', `
  :host{display:block;height:200px;border:2px solid #b4b4b4;border-top-color:#8e8e8e;background:#fff}
  ul{list-style:none;margin:0;padding:0}
  li{display:flex;align-items:center;height:36px}
  symbol-dot{--d:24px}
  .parent{background:#d0d0d0;font-weight:700;padding-left:12px}
  .child{padding-left:94px}
  symbol-dot{margin-right:16px}
  .parent symbol-dot{margin-left:24px}
  i{border:9px solid transparent;border-top:15px solid #8a8a8a;border-bottom:0}`, `
  <ul><li class="parent"><i></i><symbol-dot style="--c:#cf57ac"></symbol-dot>Marker</li>
  <li class="child"><symbol-dot style="--c:#db2387;--b:#5f4f58"></symbol-dot>Simple marker</li></ul>`);

define('symbol-preview', ':host{display:flex;justify-content:center}svg{display:block;width:200px;height:200px}',
  '<svg viewBox="0 0 200 200"><path d="M0 101h200M101 0v200" stroke="#9d9da4" stroke-width="2"/><circle cx="102" cy="102" r="11" fill="#db2387" stroke="#5a4a54" stroke-width="2"/></svg>');

define('symbol-buttons', `
  :host{display:flex;gap:12px;padding-left:12px}
  button{display:grid;place-items:center;width:76px;height:42px;border:2px solid #d3d3d3;border-radius:8px;background:#f3f3f3}
  button.on{background:#fff;border-color:#c2c2c2;border-bottom-color:#a8a8a8}
  q-icon{width:28px;height:28px}`, `
  <button class="on" aria-label="Add symbol layer"><q-icon name="add"></q-icon></button>
  <button aria-label="Remove symbol layer"><q-icon name="remove"></q-icon></button>
  <button aria-label="Lock colour"><q-icon name="lock"></q-icon></button>
  <button aria-label="Duplicate"><q-icon name="copy"></q-icon></button>
  <button aria-label="Move up"><q-icon name="up"></q-icon></button>
  <button aria-label="Move down"><q-icon name="down"></q-icon></button>`);

define('style-page', `
  :host{display:flex;flex-direction:column;flex:1;min-width:0;background:#ebebeb;padding:10px 16px 0 26px}
  renderer-combo{margin:0 4px 26px}
  .scroll{display:flex;flex:1;min-height:0;gap:2px}
  .content{flex:1;min-width:0;padding-top:2px;overflow:hidden}
  .bar{flex:none;width:26px;padding:2px 4px 0 6px;background:#fafafa}
  .bar div{height:598px;border-radius:8px;background:#c1c1c1}
  .top{display:grid;grid-template-columns:1fr 1fr;gap:20px}
  symbol-buttons{margin:36px 0 40px}
  hr{margin:0;border:0;height:4px;background:linear-gradient(#bcbcbc 50%,#fff 50%)}
  combo-field{margin:34px 12px 34px 0}
  slider-field{margin-bottom:16px}
  color-field{margin-bottom:34px}
  number-field{margin-bottom:28px}
  number-field:last-of-type{margin-bottom:10px}`, `
  <renderer-combo></renderer-combo>
  <div class="scroll">
    <div class="content">
      <div class="top"><symbol-tree></symbol-tree><symbol-preview></symbol-preview></div>
      <symbol-buttons></symbol-buttons>
      <hr>
      <combo-field label="Unit" value="Millimeter"></combo-field>
      <slider-field></slider-field>
      <color-field></color-field>
      <number-field label="Size" value="4.00000"></number-field>
      <number-field label="Rotation" value="0.00 °"></number-field>
      <hr>
    </div>
    <div class="bar"><div></div></div>
  </div>`);

define('properties-dialog', `
  :host{display:flex;flex-direction:column;border-radius:10px 10px 0 0;overflow:hidden;background:#ebebeb}
  window-title{height:44px;border-top:2px solid #fdfdfd}
  window-title q-icon{width:28px;height:30px}
  main{position:relative;display:flex;flex:1;min-height:0}
  .handle{position:absolute;left:300px;top:706px;width:14px;height:18px;background:radial-gradient(circle at 6px 9px,#bdbdbd 5px,transparent 6px),#f8f8f8}`, `
  <window-title dialog><q-icon name="logo"></q-icon>Layer Properties - JacksonianStreetAddressJoin.shp JacksonianStreetAddressJoin Point | Style</window-title>
  <main><settings-tabs></settings-tabs><style-page></style-page><span class="handle"></span></main>`);

define('qgis-desktop', `
  :host{display:block;position:relative;height:100vh;min-height:600px;overflow:hidden;background:#f6cfae}
  .wall{position:absolute;right:0;top:0;width:96px;height:66px}
  main-window{width:calc(100% - 96px)}
  .shade{position:absolute;left:616px;top:64px;right:0;bottom:0;border-radius:10px 10px 0 0;box-shadow:0 30px 80px rgba(0,0,0,.32),0 0 3px rgba(0,0,0,.4)}
  properties-dialog{height:100%}`, `
  <svg class="wall" viewBox="0 0 96 66"><defs><linearGradient id="g" x1="0" y1="0" x2="1" y2="1"><stop offset="0" stop-color="#f0c6b8"/><stop offset=".35" stop-color="#ecd3b4"/><stop offset=".7" stop-color="#f8cba8"/><stop offset="1" stop-color="#f6cf9c"/></linearGradient></defs>
    <rect width="96" height="66" fill="url(#g)"/><path d="M0 26l8-4 11-10q5-1 7 3-2 8-8 13l-6 10q-3 14-4 28H0z" fill="#cf4a37"/><path d="M19 13q6-4 8 3l-4 5z" fill="#a98b52"/><path d="M10 59h86" stroke="#a98468" stroke-width="2"/></svg>
  <main-window></main-window>
  <div class="shade"><properties-dialog></properties-dialog></div>`);
</script>
</body>
</html>
